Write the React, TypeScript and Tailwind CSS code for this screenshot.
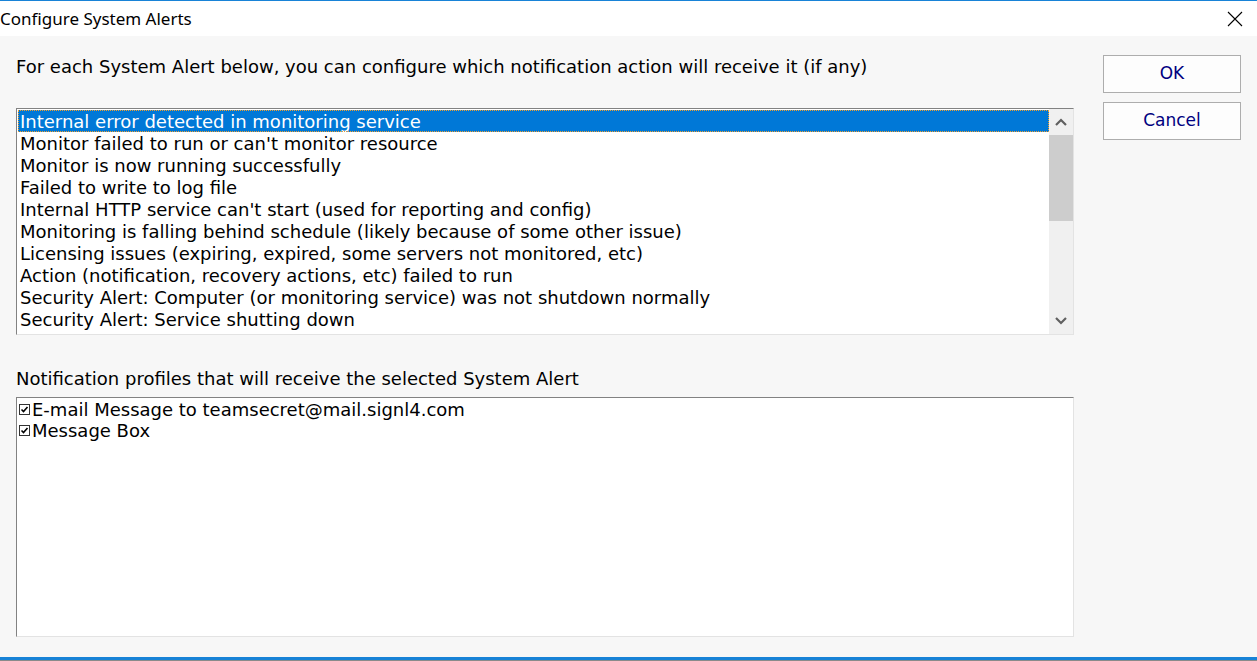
import React from "react";

const alerts = [
  "Internal error detected in monitoring service",
  "Monitor failed to run or can't monitor resource",
  "Monitor is now running successfully",
  "Failed to write to log file",
  "Internal HTTP service can't start (used for reporting and config)",
  "Monitoring is falling behind schedule (likely because of some other issue)",
  "Licensing issues (expiring, expired, some servers not monitored, etc)",
  "Action (notification, recovery actions, etc) failed to run",
  "Security Alert: Computer (or monitoring service) was not shutdown normally",
  "Security Alert: Service shutting down",
];

const profiles = ["E-mail Message to teamsecret@mail.signl4.com", "Message Box"];

function Check() {
  return (
    <span className="inline-flex w-[11px] h-[11px] border border-[#333] bg-white items-center justify-center mr-[2px] shrink-0">
      <svg width="9" height="9" viewBox="0 0 9 9">
        <path d="M1.5 4.5 L3.5 6.5 L7.5 2" stroke="#000" strokeWidth="1.6" fill="none" />
      </svg>
    </span>
  );
}

export default function App() {
  const verdana = { fontFamily: '"DejaVu Sans", Verdana, sans-serif' };
  return (
    <div className="w-[1257px] h-[661px] bg-[#f7f7f7] flex flex-col overflow-hidden relative">
      <div className="h-px bg-[#1883d7]" />
      <div className="h-[35px] bg-white flex items-center justify-between">
        <span className="text-[17px] text-black" style={{ fontFamily: '"Noto Sans", "Open Sans", sans-serif' }}>
          Configure System Alerts
        </span>
        <svg width="16" height="16" viewBox="0 0 16 16" className="mr-[14px]">
          <path d="M1 1 L15 15 M15 1 L1 15" stroke="#000" strokeWidth="1.1" />
        </svg>
      </div>
      <div className="flex-1 flex" style={verdana}>
        <div className="w-[1074px] pl-[16px] flex flex-col">
          <div className="h-[72px] flex items-start pt-[17px] text-[18px] text-black whitespace-nowrap">
            For each System Alert below, you can configure which notification action will receive it (if any)
          </div>
          <div className="h-[227px] w-[1058px] border-t border-l border-t-[#828282] border-l-[#828282] border-r border-b border-r-[#e3e3e3] border-b-[#e3e3e3] bg-white flex">
            <div className="flex-1 pt-[1px] pl-[1px] overflow-hidden">
              {alerts.map((a, i) => (
                <div
                  key={i}
                  className={
                    "h-[22px] leading-[24px] pl-[2px] text-[18px] whitespace-nowrap " +
                    (i === 0 ? "bg-[#0078d7] text-white outline outline-1 outline-dotted outline-[#f0a030] -outline-offset-1" : "text-black")
                  }
                >
                  {a}
                </div>
              ))}
            </div>
            <div className="w-[24px] bg-[#f0f0f0] flex flex-col items-center">
              <div className="h-[26px] w-full flex items-center justify-center">
                <svg width="12" height="8" viewBox="0 0 12 8">
                  <path d="M1 7 L6 2 L11 7" stroke="#606060" strokeWidth="2.2" fill="none" />
                </svg>
              </div>
              <div className="h-[86px] w-full bg-[#cdcdcd]" />
              <div className="flex-1" />
              <div className="h-[26px] w-full flex items-center justify-center">
                <svg width="12" height="8" viewBox="0 0 12 8">
                  <path d="M1 1 L6 6 L11 1" stroke="#606060" strokeWidth="2.2" fill="none" />
                </svg>
              </div>
            </div>
          </div>
          <div className="h-[62px] flex items-end pb-[5px] text-[18px] text-black whitespace-nowrap">
            Notification profiles that will receive the selected System Alert
          </div>
          <div className="h-[240px] w-[1058px] border-t border-l border-t-[#828282] border-l-[#828282] border-r border-b border-r-[#e3e3e3] border-b-[#e3e3e3] bg-white pt-[1px] pl-[2px]">
            {profiles.map((p, i) => (
              <div key={i} className="h-[21px] leading-[21px] flex items-center text-[18px] text-black whitespace-nowrap">
                <Check />
                {p}
              </div>
            ))}
          </div>
        </div>
        <div className="flex flex-col gap-[9px] pl-[29px] pt-[19px]">
          <button className="w-[138px] h-[38px] bg-[#fdfdfd] border border-[#adadad] text-[17px] text-[#000080]">OK</button>
          <button className="w-[138px] h-[38px] bg-[#fdfdfd] border border-[#adadad] text-[17px] text-[#000080]">Cancel</button>
        </div>
      </div>
      <div className="h-[3px] bg-[#1883d7]" />
      <div className="h-[1px] bg-[#8a8a8a]" />
    </div>
  );
}
